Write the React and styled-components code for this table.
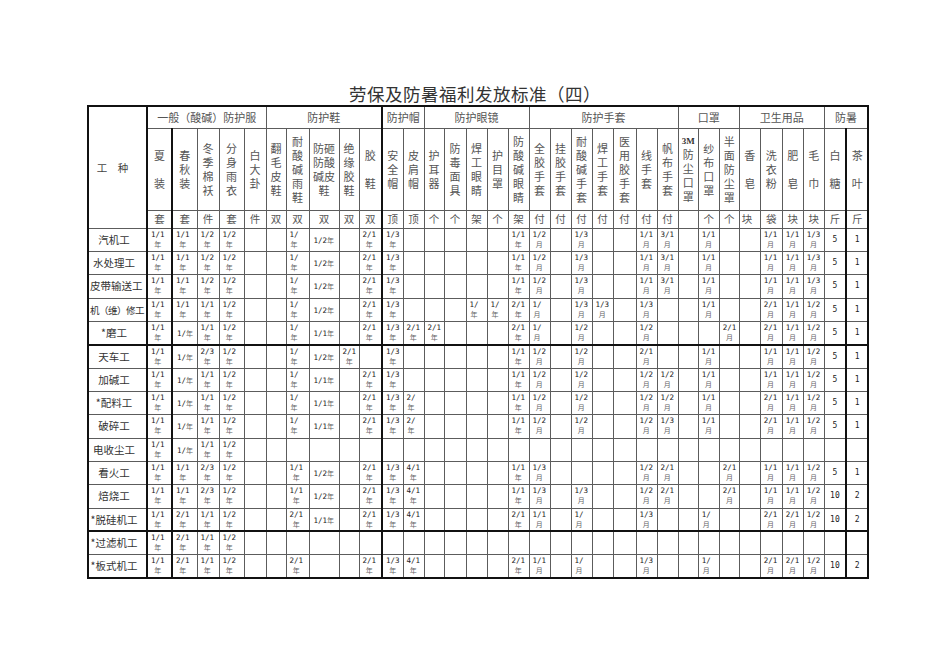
import React from 'react';
import styled, { createGlobalStyle } from 'styled-components';

const GlobalStyle = createGlobalStyle`
  html, body {
    margin: 0;
    padding: 0;
    background: #fff;
  }
  body {
    font-family: "Noto Sans CJK SC", "Noto Sans", sans-serif;
    color: #333;
  }
`;

const Page = styled.div`
  width: 950px;
  height: 672px;
  padding-top: 83px;
  box-sizing: border-box;
`;

const Title = styled.h1`
  margin: 0;
  height: 22px;
  line-height: 22px;
  text-align: center;
  font-size: 17.5px;
  font-weight: 400;
  color: #333;
  letter-spacing: 0.5px;
`;

const Sheet = styled.table`
  margin-left: 87px;
  width: 780px;
  table-layout: fixed;
  border-collapse: collapse;
  border: 2px solid #111;
`;

const Row = styled.tr`
  height: ${p => p.$h}px;
`;

const line = '1px solid #5c5c5c';
const heavy = '2px solid #111';

const Cell = styled.td`
  padding: 0;
  border: ${line};
  border-left: ${p => (p.$thick ? heavy : line)};
  border-bottom: ${p => (p.$rule ? heavy : line)};
  overflow: visible;
`;

const GroupCell = styled(Cell)`
  font-size: 11px;
  line-height: 14px;
  text-align: center;
  font-weight: 400;
  color: #555;
  white-space: nowrap;
`;

const NameCell = styled(Cell)`
  font-size: 10.5px;
  font-weight: 400;
  text-align: center;
  padding-right: 10px;
  color: #444;
`;

const LabelCell = styled(Cell)`
  vertical-align: middle;
  text-align: center;
  font-size: 11px;
  font-weight: 400;
  line-height: 14px;
  color: #555;
`;

const LabelLine = styled.div`
  white-space: nowrap;
  height: 14px;
`;

const Brand = styled.div`
  font-family: "Liberation Serif", serif;
  font-weight: 700;
  font-size: 9px;
  line-height: 12px;
  color: #333;
`;

const UnitCell = styled(Cell)`
  font-size: 10.5px;
  font-weight: 400;
  line-height: 14px;
  text-align: ${p => (p.$left ? 'left' : 'center')};
  padding-left: ${p => (p.$left ? '2px' : '0')};
  color: #555;
`;

const RowName = styled(Cell)`
  font-size: 10.5px;
  font-weight: 400;
  line-height: 14px;
  padding: 0 8px 0 1px;
  color: #333;
`;

const NameWrap = styled.div`
  display: flex;
  justify-content: safe center;
  white-space: nowrap;
  font-size: ${p => (p.$tight ? '9.5px' : 'inherit')};
  letter-spacing: ${p => (p.$tight ? '-0.5px' : '0')};
`;

const DataCell = styled(Cell)`
  font-size: 0;
  line-height: 0;
  vertical-align: ${p => (p.$kind === 'stack' ? 'top' : 'middle')};
  text-align: ${p => (p.$kind === 'qty' ? 'center' : 'left')};
`;

const Stack = styled.div`
  display: inline-flex;
  flex-direction: column;
  align-items: center;
  margin: 1px 0 0 3px;
`;

const Inline = styled.div`
  display: flex;
  align-items: baseline;
  margin-left: 4px;
  white-space: nowrap;
`;

const Num = styled.span`
  font-family: "DejaVu Sans Mono", "Liberation Mono", monospace;
  font-size: 7.5px;
  line-height: 9px;
  color: #222;
  white-space: nowrap;
`;

const Per = styled.span`
  font-size: 7px;
  line-height: 10px;
  color: #666;
`;

const Qty = styled.span`
  font-family: "DejaVu Sans Mono", "Liberation Mono", monospace;
  font-size: 8px;
  line-height: 10px;
  color: #222;
`;

const COLS = [59, 25, 25, 22, 25, 22, 20, 23, 30, 20, 23, 21, 21, 20, 22, 21, 21, 21, 21, 21, 21, 21, 23, 21, 21, 20, 21, 20, 21, 22, 21, 21, 22, 22];

// columns whose left edge is drawn heavy
const THICK = new Set([1, 2, 11, 33]);

const GROUPS = [
  { label: '一般（酸碱）防护服', span: 5, start: 1 },
  { label: '防护鞋', span: 5, start: 6 },
  { label: '防护帽', span: 2, start: 11 },
  { label: '防护眼镜', span: 5, start: 13 },
  { label: '防护手套', span: 7, start: 18 },
  { label: '口罩', span: 3, start: 25 },
  { label: '卫生用品', span: 4, start: 28 },
  { label: '防暑', span: 2, start: 32 },
];

const LABELS = [
  ['夏', '', '装'], ['春', '秋', '装'], ['冬', '季', '棉', '袄'], ['分', '身', '雨', '衣'], ['白', '大', '卦'],
  ['翻', '毛', '皮', '鞋'], ['耐', '酸', '碱', '雨', '鞋'], ['防砸', '防酸', '碱皮', '鞋'], ['绝', '缘', '胶', '鞋'], ['胶', '', '鞋'],
  ['安', '全', '帽'], ['皮', '肩', '帽'],
  ['护', '耳', '器'], ['防', '毒', '面', '具'], ['焊', '工', '眼', '睛'], ['护', '目', '罩'], ['防', '酸', '碱', '眼', '睛'],
  ['全', '胶', '手', '套'], ['挂', '胶', '手', '套'], ['耐', '酸', '碱', '手', '套'], ['焊', '工', '手', '套'], ['医', '用', '胶', '手', '套'], ['线', '手', '套'], ['帆', '布', '手', '套'],
  ['3M', '防', '尘', '口', '罩'], ['纱', '布', '口', '罩'], ['半', '面', '防', '尘', '罩'],
  ['香', '', '皂'], ['洗', '衣', '粉'], ['肥', '', '皂'], ['毛', '', '巾'],
  ['白', '', '糖'], ['茶', '', '叶'],
];

const UNITS = ['套', '套', '件', '套', '件', '双', '双', '双', '双', '双', '顶', '顶', '个', '个', '架', '个', '架', '付', '付', '付', '付', '付', '付', '付', '', '个', '个', '块', '袋', '块', '块', '斤', '斤'];

const basic = { 1: '1/1|年', 2: '1/1|年', 3: '1/2|年', 4: '1/2|年', 7: '1/|年', 8: '1/2年', 10: '2/1|年', 11: '1/3|年', 17: '1/1|年', 18: '1/2|月', 20: '1/3|月', 23: '1/1|月', 24: '3/1|月', 26: '1/1|月', 29: '1/1|月', 30: '1/1|月', 31: '1/3|月', 32: '5', 33: '1' };
const alkali = { 1: '1/1|年', 2: '1/年', 3: '1/1|年', 4: '1/2|年', 7: '1/|年', 8: '1/1年', 10: '2/1|年', 11: '1/3|年', 17: '1/1|年', 18: '1/2|月', 20: '1/2|月', 23: '1/2|月', 24: '1/2|月', 26: '1/1|月', 29: '1/1|月', 30: '1/1|月', 31: '1/2|月', 32: '5', 33: '1' };
const fire = { 1: '1/1|年', 2: '1/1|年', 3: '2/3|年', 4: '1/2|年', 7: '1/1|年', 8: '1/2年', 10: '2/1|年', 11: '1/3|年', 12: '4/1|年', 17: '1/1|年', 18: '1/3|月', 23: '1/2|月', 24: '2/1|月', 27: '2/1|月', 29: '1/1|月', 30: '1/1|月', 31: '1/2|月', 32: '5', 33: '1' };
const silica = { 1: '1/1|年', 2: '2/1|年', 3: '1/1|年', 4: '1/2|年', 7: '2/1|年', 8: '1/1年', 10: '2/1|年', 11: '1/3|年', 12: '4/1|年', 17: '2/1|年', 18: '1/1|月', 20: '1/|月', 23: '1/3|月', 26: '1/|月', 29: '2/1|月', 30: '2/1|月', 31: '1/2|月', 32: '10', 33: '2' };
const { 8: _skip, ...plate } = silica;

const ROWS = [
  { name: '汽机工', cells: basic },
  { name: '水处理工', cells: basic },
  { name: '皮带输送工', cells: basic },
  {
    name: '机（维）修工',
    cells: { 1: '1/1|年', 2: '1/1|年', 3: '1/1|年', 4: '1/2|年', 7: '1/|年', 8: '1/2年', 10: '2/1|年', 11: '1/3|年', 15: '1/|年', 16: '1/|年', 17: '2/1|年', 18: '1/|月', 20: '1/3|月', 21: '1/3|月', 23: '1/3|月', 26: '1/1|月', 29: '2/1|月', 30: '1/1|月', 31: '1/2|月', 32: '5', 33: '1' },
  },
  {
    name: '*磨工',
    rule: true,
    cells: { 1: '1/1|年', 2: '1/年', 3: '1/1|年', 4: '1/2|年', 7: '1/|年', 8: '1/1年', 10: '2/1|年', 11: '1/3|年', 12: '2/1|年', 13: '2/1|年', 17: '2/1|年', 18: '1/|月', 20: '1/2|月', 23: '1/2|月', 27: '2/1|月', 29: '2/1|月', 30: '1/1|月', 31: '1/2|月', 32: '5', 33: '1' },
  },
  {
    name: '天车工',
    cells: { 1: '1/1|年', 2: '1/年', 3: '2/3|年', 4: '1/2|年', 7: '1/|年', 8: '1/2年', 9: '2/1|年', 11: '1/3|年', 17: '1/1|年', 18: '1/2|月', 20: '1/2|月', 23: '2/1|月', 26: '1/1|月', 29: '1/1|月', 30: '1/1|月', 31: '1/2|月', 32: '5', 33: '1' },
  },
  { name: '加碱工', cells: alkali },
  { name: '*配料工', cells: { ...alkali, 12: '2/|年', 29: '2/1|月' } },
  { name: '破碎工', cells: { ...alkali, 12: '2/|年', 24: '1/3|月', 29: '2/1|月' } },
  { name: '电收尘工', cells: { 1: '1/1|年', 2: '1/年', 3: '1/1|年', 4: '1/2|年' } },
  { name: '看火工', cells: fire },
  { name: '焙烧工', cells: { ...fire, 20: '1/3|月', 32: '10', 33: '2' } },
  { name: '*脱硅机工', rule: true, cells: silica },
  { name: '*过滤机工', cells: { 1: '1/1|年', 2: '2/1|年', 3: '1/1|年', 4: '1/2|年' } },
  { name: '*板式机工', cells: plate },
];

const kindOf = v => {
  if (!v) return 'empty';
  if (v.includes('|')) return 'stack';
  if (/[年月]$/.test(v)) return 'inline';
  return 'qty';
};

const Entry = ({ value }) => {
  const kind = kindOf(value);
  if (kind === 'stack') {
    const [n, u] = value.split('|');
    return (
      <Stack>
        <Num>{n}</Num>
        <Per>{u}</Per>
      </Stack>
    );
  }
  if (kind === 'inline') {
    return (
      <Inline>
        <Num>{value.slice(0, -1)}</Num>
        <Per>{value.slice(-1)}</Per>
      </Inline>
    );
  }
  if (kind === 'qty') return <Qty>{value}</Qty>;
  return null;
};

const App = () => {
  const cols = Array.from({ length: 33 }, (_, i) => i + 1);

  return (
    <Page>
      <GlobalStyle />
      <Title>劳保及防暑福利发放标准（四）</Title>
      <Sheet>
        <colgroup>
          {COLS.map((w, i) => (
            <col key={i} style={{ width: w }} />
          ))}
        </colgroup>
        <thead>
          <Row $h={22}>
            <NameCell as="th" rowSpan={3}>工　种</NameCell>
            {GROUPS.map(g => (
              <GroupCell as="th" key={g.label} colSpan={g.span} $thick={THICK.has(g.start)}>
                {g.label}
              </GroupCell>
            ))}
          </Row>
          <Row $h={82}>
            {LABELS.map((lines, i) => (
              <LabelCell as="th" key={i} $thick={THICK.has(i + 1)}>
                {lines.map((t, j) =>
                  t === '3M' ? (
                    <Brand key={j}>3M</Brand>
                  ) : (
                    <LabelLine key={j}>{t || '\u00a0'}</LabelLine>
                  )
                )}
              </LabelCell>
            ))}
          </Row>
          <Row $h={18}>
            {UNITS.map((u, i) => (
              <UnitCell as="th" key={i} $thick={THICK.has(i + 1)} $left={i === 27}>
                {u}
              </UnitCell>
            ))}
          </Row>
        </thead>
        <tbody>
          {ROWS.map(row => (
            <Row key={row.name} $h={23.35}>
              <RowName as="th" $rule={row.rule}>
                <NameWrap $tight={row.name.length > 5}>{row.name}</NameWrap>
              </RowName>
              {cols.map(c => (
                <DataCell key={c} $thick={THICK.has(c)} $rule={row.rule} $kind={kindOf(row.cells[c])}>
                  <Entry value={row.cells[c]} />
                </DataCell>
              ))}
            </Row>
          ))}
        </tbody>
      </Sheet>
    </Page>
  );
};

export default App;
